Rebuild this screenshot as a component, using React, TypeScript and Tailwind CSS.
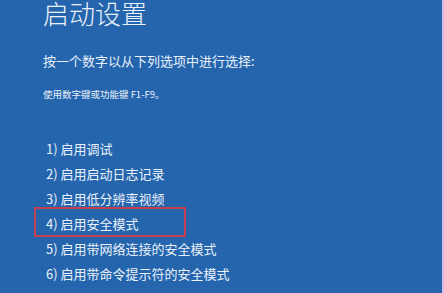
import React from "react";

const items = [
  "1) 启用调试",
  "2) 启用启动日志记录",
  "3) 启用低分辨率视频",
  "4) 启用安全模式",
  "5) 启用带网络连接的安全模式",
  "6) 启用带命令提示符的安全模式",
  "7) 禁用驱动程序强制签名",
];

const App = () => {
  return (
    <div className="flex w-[444px] h-[293px] overflow-hidden bg-[#2465ad] text-[#eaf1fa] font-['Noto_Sans_CJK_SC','Noto_Sans',sans-serif]">
      <div className="flex-1 pl-[43px]">
        <div className="text-[26px] leading-[30px] font-light -mt-[2px] h-[30px]">启动设置</div>
        <div className="mt-[25px] text-[13px] leading-[16px]">按一个数字以从下列选项中进行选择:</div>
        <div className="mt-[19px] text-[9.5px] leading-[12px]">使用数字键或功能键 F1-F9。</div>
        <div className="mt-[36px] pl-[3px] flex flex-col text-[13px] leading-[25px]">
          {items.map((item, index) => (
            <div key={index} className="relative whitespace-nowrap">
              {item}
              {index === 3 && (
                <div className="absolute left-[-12px] top-[-4px] w-[152px] h-[30px] border-2 border-[#c5414f]" />
              )}
            </div>
          ))}
        </div>
      </div>
      <div className="w-[2px] bg-[#d9b8ea]" />
    </div>
  );
};

export default App;
